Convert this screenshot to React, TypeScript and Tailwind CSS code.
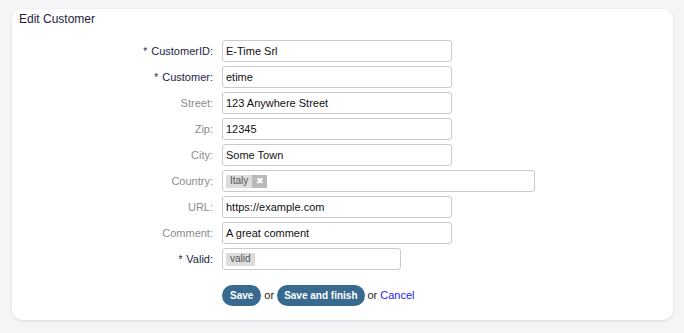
import type { ReactNode } from 'react';

type Field = {
  label: string;
  required?: boolean;
  width: string;
  value?: string;
  tag?: ReactNode;
};

function Tag({ text, removable }: { text: string; removable?: boolean }) {
  return (
    <span className="flex h-[13px] items-stretch">
      <span className="flex items-center bg-[#dcdcdc] px-[4px] text-[10px] leading-none text-[#555]">{text}</span>
      {removable && (
        <span className="flex w-[15px] items-center justify-center bg-[#b9b9b9] text-[9px] leading-none text-white">✖</span>
      )}
    </span>
  );
}

const fields: Field[] = [
  { label: 'CustomerID:', required: true, width: 'w-[230px]', value: 'E-Time Srl' },
  { label: 'Customer:', required: true, width: 'w-[230px]', value: 'etime' },
  { label: 'Street:', width: 'w-[230px]', value: '123 Anywhere Street' },
  { label: 'Zip:', width: 'w-[230px]', value: '12345' },
  { label: 'City:', width: 'w-[230px]', value: 'Some Town' },
  { label: 'Country:', width: 'w-[313px]', tag: <Tag text="Italy" removable /> },
  { label: 'URL:', width: 'w-[230px]', value: 'https://example.com' },
  { label: 'Comment:', width: 'w-[230px]', value: 'A great comment' },
  { label: 'Valid:', required: true, width: 'w-[179px]', tag: <Tag text="valid" /> },
];

export default function App() {
  return (
    <div className="h-[333px] bg-[#f5f5f8] pl-[12px] pt-[9px] font-['Liberation_Sans',Arial,sans-serif]">
      <div className="h-[311px] w-[661px] rounded-[10px] bg-white pl-[7px] pt-[2px] shadow-[0_1px_3px_rgba(30,30,60,0.12)]">
        <h2 className="text-[12px] leading-[16px] text-[#1d1d3f]">Edit Customer</h2>

        <div className="mt-[13px] grid grid-cols-[194px_auto] gap-x-[9px] gap-y-[4px]">
          {fields.map((f) => (
            <div key={f.label} className="contents">
              <div
                className={`flex h-[22px] items-center justify-end pt-[1px] text-[11px] ${
                  f.required ? 'text-[#1c2448]' : 'text-[#8c8c8c]'
                }`}
              >
                {f.required && <span className="mr-[4px] text-[10px]">*</span>}
                {f.label}
              </div>
              <div
                className={`flex h-[22px] items-center rounded-[3px] border border-[#cacaca] px-[3px] text-[11px] text-[#111] ${f.width}`}
              >
                {f.tag ?? f.value}
              </div>
            </div>
          ))}
        </div>

        <div className="mt-[15px] flex items-center gap-[3px] pl-[203px] text-[11px] text-[#222]">
          <button className="h-[21px] rounded-full bg-[#386a8f] px-[8px] text-[10px] font-bold text-white">Save</button>
          <span>or</span>
          <button className="h-[21px] rounded-full bg-[#386a8f] px-[7px] text-[10px] font-bold text-white">
            Save and finish
          </button>
          <span>or</span>
          <a href="#" className="text-[#1c1cf0]">
            Cancel
          </a>
        </div>
      </div>
    </div>
  );
}
